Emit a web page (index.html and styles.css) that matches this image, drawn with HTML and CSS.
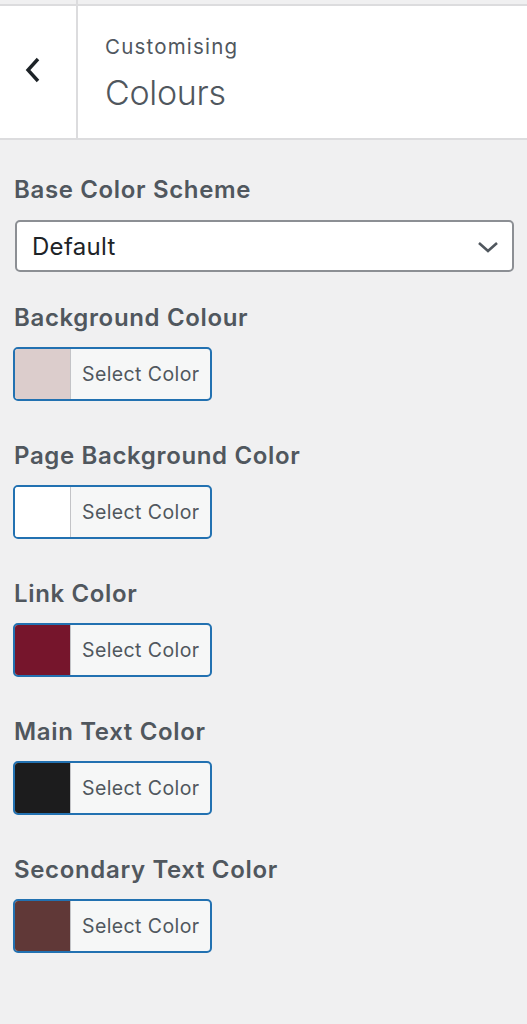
FILE: index.html
```html
<!DOCTYPE html>
<html lang="en">
<head>
<meta charset="utf-8">
<title>Customising Colours</title>
<link rel="stylesheet" href="styles.css">
</head>
<body>
<div class="topstrip"><div class="topstrip-left"></div></div>
<header class="header">
  <button class="back" aria-label="Back">
    <svg width="18" height="26" viewBox="0 0 18 26"><path d="M14 2 L4 13 L14 24" fill="none" stroke="#1d2327" stroke-width="3.4"/></svg>
  </button>
  <div class="titles">
    <div class="overline">Customising</div>
    <div class="title">Colours</div>
  </div>
</header>
<main class="content">
  <div class="control">
    <div class="label">Base Color Scheme</div>
    <div class="select">
      <span>Default</span>
      <svg width="22" height="12" viewBox="0 0 22 12"><path d="M2 2 L11 10 L20 2" fill="none" stroke="#50575e" stroke-width="2.6"/></svg>
    </div>
  </div>
  <div class="control">
    <div class="label">Background Colour</div>
    <div class="colorbtn"><span class="swatch swatch-bg"></span><span class="btntext">Select Color</span></div>
  </div>
  <div class="control">
    <div class="label">Page Background Color</div>
    <div class="colorbtn"><span class="swatch swatch-page"></span><span class="btntext">Select Color</span></div>
  </div>
  <div class="control">
    <div class="label">Link Color</div>
    <div class="colorbtn"><span class="swatch swatch-link"></span><span class="btntext">Select Color</span></div>
  </div>
  <div class="control">
    <div class="label">Main Text Color</div>
    <div class="colorbtn"><span class="swatch swatch-main"></span><span class="btntext">Select Color</span></div>
  </div>
  <div class="control">
    <div class="label">Secondary Text Color</div>
    <div class="colorbtn"><span class="swatch swatch-secondary"></span><span class="btntext">Select Color</span></div>
  </div>
</main>
</body>
</html>
```

FILE: styles.css
```css
* { box-sizing: border-box; }
html, body { margin: 0; padding: 0; }
body {
  background: #f0f0f1;
  font-family: Inter, "Noto Sans", "Liberation Sans", sans-serif;
  color: #50575e;
  height: 1024px;
  overflow: hidden;
}
.topstrip {
  height: 6px;
  border-bottom: 2px solid #dcdcde;
  display: flex;
}
.topstrip-left {
  width: 78px;
  border-right: 2px solid #dcdcde;
}
.header {
  display: flex;
  height: 134px;
  background: #fff;
  border-bottom: 2px solid #dcdcde;
}
.back {
  width: 78px;
  border: 0;
  border-right: 2px solid #dcdcde;
  background: #fff;
  display: flex;
  align-items: center;
  justify-content: center;
  padding: 0 10px 4px 0;
  margin: 0;
}
.titles {
  padding: 29px 0 0 27px;
}
.overline {
  font-size: 20.5px;
  line-height: 24px;
  letter-spacing: 1.2px;
  color: #50575e;
}
.title {
  font-size: 34px;
  font-weight: 300;
  line-height: 40px;
  margin-top: 14px;
  color: #50575e;
  letter-spacing: -0.3px;
}
.content {
  padding: 35px 13px 0 13px;
  display: flex;
  flex-direction: column;
  gap: 31px;
}
.control {
  display: flex;
  flex-direction: column;
  gap: 14px;
}
.control + .control + .control { margin-top: 9px; }
.label {
  font-size: 24px;
  font-weight: 600;
  line-height: 30px;
  letter-spacing: 0.65px;
  padding-left: 1px;
  color: #50575e;
}
.select {
  margin-left: 2px;
  margin-top: 1px;
  height: 52px;
  background: #fff;
  border: 2px solid #8c8f94;
  border-radius: 5px;
  display: flex;
  align-items: center;
  justify-content: space-between;
  padding: 0 13px 0 15px;
  font-size: 24px;
  letter-spacing: 0.3px;
  color: #1d2327;
}
.select svg { margin-top: 2px; }
.colorbtn {
  width: 199px;
  height: 54px;
  border: 2px solid #2271b1;
  border-radius: 5px;
  display: flex;
  overflow: hidden;
  background: #f6f7f7;
}
.swatch {
  width: 56px;
  border-right: 1px solid #c3c4c7;
}
.swatch-bg { background: #dccdcc; }
.swatch-page { background: #ffffff; }
.swatch-link { background: #76152c; }
.swatch-main { background: #1c1c1d; }
.swatch-secondary { background: #603837; }
.btntext {
  display: flex;
  align-items: center;
  padding-left: 11px;
  font-size: 19.5px;
  letter-spacing: 0.4px;
  color: #50575e;
}
```
